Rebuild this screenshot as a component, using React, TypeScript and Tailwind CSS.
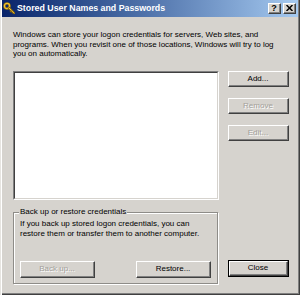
const face = "bg-[#d6d3ce]";

function KeyIcon() {
  return (
    <svg width="12" height="13" viewBox="0 0 12 13" className="shrink-0">
      <circle cx="4" cy="4" r="2.6" fill="none" stroke="#8a6a10" strokeWidth="2.4" />
      <circle cx="4" cy="4" r="2.6" fill="none" stroke="#f2c230" strokeWidth="1.2" />
      <path d="M5.8 5.8 L11 11" stroke="#8a6a10" strokeWidth="2.4" strokeLinecap="round" />
      <path d="M5.8 5.8 L11 11" stroke="#f2c230" strokeWidth="1" strokeLinecap="round" />
      <path d="M8.5 8.5 L7 10 M10 10 L8.8 11.2" stroke="#8a6a10" strokeWidth="1.2" />
    </svg>
  );
}

function CaptionButton({ children }: { children: React.ReactNode }) {
  return (
    <div className="w-[13px] h-[11px] border border-t-white border-l-white border-r-[#404040] border-b-[#404040] bg-[#d6d3ce]">
      <div className="w-full h-full flex items-center justify-center border-r border-b border-[#808080]">
        {children}
      </div>
    </div>
  );
}

function Button({
  label,
  disabled,
  isDefault,
  className,
}: {
  label: string;
  disabled?: boolean;
  isDefault?: boolean;
  className: string;
}) {
  const inner = (
    <div className="w-full h-full border border-t-white border-l-white border-r-[#404040] border-b-[#404040]">
      <div
        className={`w-full h-full flex items-center justify-center border-r border-b border-r-[#808080] border-b-[#808080] text-[8px] leading-none ${
          disabled ? "text-[#a3a09a] [text-shadow:1px_1px_0_#fff]" : "text-black"
        }`}
      >
        {label}
      </div>
    </div>
  );
  if (isDefault) {
    return <div className={`${className} border border-black ${face}`}>{inner}</div>;
  }
  return <div className={`${className} ${face}`}>{inner}</div>;
}

export default function App() {
  return (
    <div
      className={`w-[300px] h-[295px] ${face} font-['Liberation_Sans',Arial,sans-serif] text-black flex flex-col pl-[2px] pr-[2px] shadow-[inset_1px_0_0_#e6e4e0,inset_2px_0_0_#ffffff,inset_-1px_-1px_0_#404040,inset_-2px_-2px_0_#808080]`}
    >
      {/* title bar */}
      <div className="h-[17px] flex items-center bg-linear-to-r from-[#0a246a] to-[#a6caf0] pl-[1px] pr-[2px]">
        <KeyIcon />
        <span className="ml-[2px] text-white font-bold text-[8.8px] leading-none whitespace-nowrap">
          Stored User Names and Passwords
        </span>
        <div className="ml-auto flex gap-[2px]">
          <CaptionButton>
            <span className="text-[9px] font-bold leading-none text-black">?</span>
          </CaptionButton>
          <CaptionButton>
            <svg width="7" height="6" viewBox="0 0 7 6">
              <path d="M0.5 0 L6.5 6 M6.5 0 L0.5 6" stroke="#000" strokeWidth="1.5" />
            </svg>
          </CaptionButton>
        </div>
      </div>

      {/* body */}
      <div className="flex flex-col pl-[11px]">
        <p className="mt-[13px] h-[41px] text-[8px] leading-[9.6px] whitespace-nowrap">
          Windows can store your logon credentials for servers, Web sites, and
          <br />
          programs. When you revisit one of those locations, Windows will try to log
          <br />
          you on automatically.
        </p>

        <div className="flex">
          <div className="w-[206px] h-[129px] border border-t-[#808080] border-l-[#808080] border-r-white border-b-white">
            <div className="w-full h-full bg-white border border-t-[#404040] border-l-[#404040] border-r-[#d6d3ce] border-b-[#d6d3ce]" />
          </div>
          <div className="ml-[9px] w-[61px] flex flex-col gap-[11px]">
            <Button label="Add..." className="h-[16px]" />
            <Button label="Remove" disabled className="h-[16px]" />
            <Button label="Edit..." disabled className="h-[16px]" />
          </div>
        </div>

        <div className="flex items-end mt-[7px]">
          <fieldset className="w-[205px] border border-[#8e8c88] shadow-[1px_1px_0_#fff,inset_1px_1px_0_#fff] pl-[6px] pr-[6px] pt-[2px] pb-[5px]">
            <legend className={`px-[1px] -ml-[1px] text-[8px] leading-[10px] whitespace-nowrap ${face}`}>
              Back up or restore credentials
            </legend>
            <p className="text-[8px] leading-[10px] whitespace-nowrap">
              If you back up stored logon credentials, you can
              <br />
              restore them or transfer them to another computer.
            </p>
            <div className="mt-[22px] flex justify-between">
              <Button label="Back up..." disabled className="w-[75px] h-[17px]" />
              <Button label="Restore..." className="w-[75px] h-[17px]" />
            </div>
          </fieldset>
          <div className="ml-[10px] mb-[7px]">
            <Button label="Close" isDefault className="w-[61px] h-[17px]" />
          </div>
        </div>
      </div>
    </div>
  );
}
